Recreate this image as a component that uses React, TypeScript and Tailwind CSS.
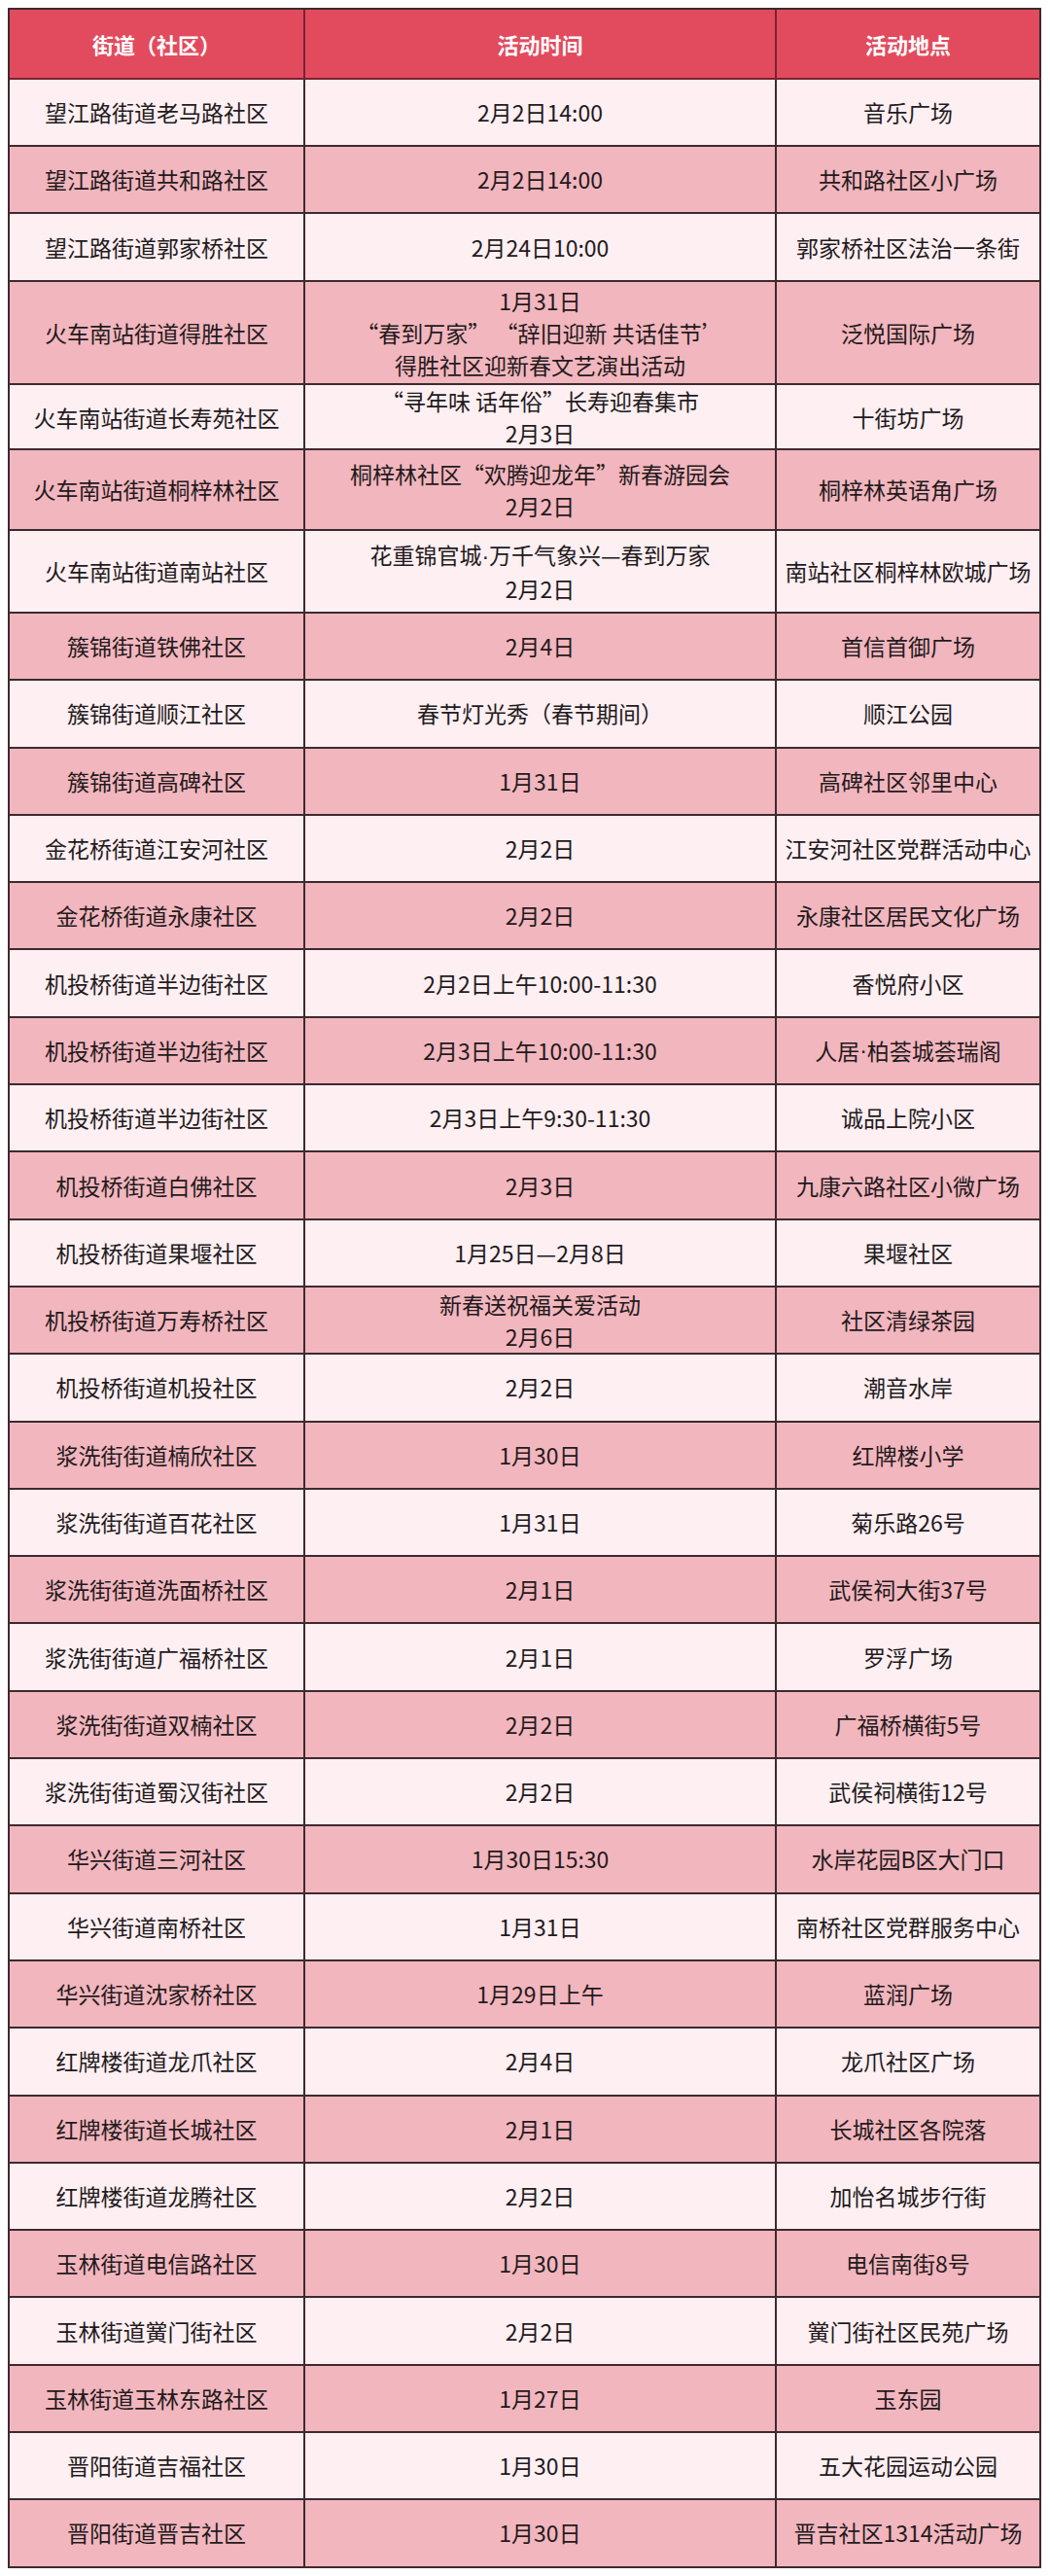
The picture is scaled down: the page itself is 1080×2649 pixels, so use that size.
import React from "react";

type Row = { a: string; b: string[]; c: string; h: string };

const rows: Row[] = [
  { a: "望江路街道老马路社区", b: ["2月2日14:00"], c: "音乐广场", h: "h-[69px]" },
  { a: "望江路街道共和路社区", b: ["2月2日14:00"], c: "共和路社区小广场", h: "h-[69px]" },
  { a: "望江路街道郭家桥社区", b: ["2月24日10:00"], c: "郭家桥社区法治一条街", h: "h-[70px]" },
  {
    a: "火车南站街道得胜社区",
    b: ["1月31日", "“春到万家” “辞旧迎新 共话佳节’", "得胜社区迎新春文艺演出活动"],
    c: "泛悦国际广场",
    h: "h-[106px]",
  },
  { a: "火车南站街道长寿苑社区", b: ["“寻年味 话年俗”长寿迎春集市", "2月3日"], c: "十街坊广场", h: "h-[67px]" },
  { a: "火车南站街道桐梓林社区", b: ["桐梓林社区“欢腾迎龙年”新春游园会", "2月2日"], c: "桐梓林英语角广场", h: "h-[83px]" },
  { a: "火车南站街道南站社区", b: ["花重锦官城·万千气象兴—春到万家", "2月2日"], c: "南站社区桐梓林欧城广场", h: "h-[85px]" },
  { a: "簇锦街道铁佛社区", b: ["2月4日"], c: "首信首御广场", h: "h-[69.3px]" },
  { a: "簇锦街道顺江社区", b: ["春节灯光秀（春节期间）"], c: "顺江公园", h: "h-[69.3px]" },
  { a: "簇锦街道高碑社区", b: ["1月31日"], c: "高碑社区邻里中心", h: "h-[69.3px]" },
  { a: "金花桥街道江安河社区", b: ["2月2日"], c: "江安河社区党群活动中心", h: "h-[69.3px]" },
  { a: "金花桥街道永康社区", b: ["2月2日"], c: "永康社区居民文化广场", h: "h-[69.3px]" },
  { a: "机投桥街道半边街社区", b: ["2月2日上午10:00-11:30"], c: "香悦府小区", h: "h-[69.3px]" },
  { a: "机投桥街道半边街社区", b: ["2月3日上午10:00-11:30"], c: "人居·柏荟城荟瑞阁", h: "h-[69.3px]" },
  { a: "机投桥街道半边街社区", b: ["2月3日上午9:30-11:30"], c: "诚品上院小区", h: "h-[69.3px]" },
  { a: "机投桥街道白佛社区", b: ["2月3日"], c: "九康六路社区小微广场", h: "h-[69.3px]" },
  { a: "机投桥街道果堰社区", b: ["1月25日—2月8日"], c: "果堰社区", h: "h-[69.3px]" },
  { a: "机投桥街道万寿桥社区", b: ["新春送祝福关爱活动", "2月6日"], c: "社区清绿茶园", h: "h-[69.3px]" },
  { a: "机投桥街道机投社区", b: ["2月2日"], c: "潮音水岸", h: "h-[69.3px]" },
  { a: "浆洗街街道楠欣社区", b: ["1月30日"], c: "红牌楼小学", h: "h-[69.3px]" },
  { a: "浆洗街街道百花社区", b: ["1月31日"], c: "菊乐路26号", h: "h-[69.3px]" },
  { a: "浆洗街街道洗面桥社区", b: ["2月1日"], c: "武侯祠大街37号", h: "h-[69.3px]" },
  { a: "浆洗街街道广福桥社区", b: ["2月1日"], c: "罗浮广场", h: "h-[69.3px]" },
  { a: "浆洗街街道双楠社区", b: ["2月2日"], c: "广福桥横街5号", h: "h-[69.3px]" },
  { a: "浆洗街街道蜀汉街社区", b: ["2月2日"], c: "武侯祠横街12号", h: "h-[69.3px]" },
  { a: "华兴街道三河社区", b: ["1月30日15:30"], c: "水岸花园B区大门口", h: "h-[69.3px]" },
  { a: "华兴街道南桥社区", b: ["1月31日"], c: "南桥社区党群服务中心", h: "h-[69.3px]" },
  { a: "华兴街道沈家桥社区", b: ["1月29日上午"], c: "蓝润广场", h: "h-[69.3px]" },
  { a: "红牌楼街道龙爪社区", b: ["2月4日"], c: "龙爪社区广场", h: "h-[69.3px]" },
  { a: "红牌楼街道长城社区", b: ["2月1日"], c: "长城社区各院落", h: "h-[69.3px]" },
  { a: "红牌楼街道龙腾社区", b: ["2月2日"], c: "加怡名城步行街", h: "h-[69.3px]" },
  { a: "玉林街道电信路社区", b: ["1月30日"], c: "电信南街8号", h: "h-[69.3px]" },
  { a: "玉林街道黉门街社区", b: ["2月2日"], c: "黉门街社区民苑广场", h: "h-[69.3px]" },
  { a: "玉林街道玉林东路社区", b: ["1月27日"], c: "玉东园", h: "h-[69.3px]" },
  { a: "晋阳街道吉福社区", b: ["1月30日"], c: "五大花园运动公园", h: "h-[69.3px]" },
  { a: "晋阳街道晋吉社区", b: ["1月30日"], c: "晋吉社区1314活动广场", h: "h-[69.3px]" },
];

const font = { fontFamily: '"Noto Sans CJK SC", "Noto Sans", sans-serif' };

function Txt({ s }: { s: string }) {
  const parts = s.split("·");
  return (
    <>
      {parts.map((p, i) => (
        <React.Fragment key={i}>
          {i > 0 && <span className="font-['Liberation_Sans',sans-serif]">·</span>}
          {p}
        </React.Fragment>
      ))}
    </>
  );
}

export default function App() {
  return (
    <div className="w-[1080px] min-h-[2649px] bg-white pt-[8px] pl-[8px]" style={font}>
      <div className="w-[1063px] border-l-2 border-t-2 border-[#3d2a2e]">
        <div className="grid h-[72px] grid-cols-[304px_485px_272px] border-b-2 border-[#7a2230] bg-[#e24b5e] text-[22px] font-bold text-white">
          <div className="flex items-center justify-center border-r-2 border-[#7a2230]">街道（社区）</div>
          <div className="flex items-center justify-center border-r-2 border-[#7a2230]">活动时间</div>
          <div className="flex items-center justify-center border-r-2 border-[#3d2a2e]">活动地点</div>
        </div>
        {rows.map((r, i) => (
          <div
            key={i}
            className={`grid grid-cols-[304px_485px_272px] border-b-2 border-[#3d2a2e] text-[23px] leading-[33px] text-[#231a1c] ${r.h} ${
              i % 2 === 0 ? "bg-[#fdeff2]" : "bg-[#f2b6be]"
            }`}
          >
            <div className="flex items-center justify-center whitespace-nowrap border-r-2 border-[#3d2a2e]">
              <Txt s={r.a} />
            </div>
            <div className="flex flex-col items-center justify-center whitespace-nowrap border-r-2 border-[#3d2a2e]">
              {r.b.map((l, j) => (
                <div key={j}>
                  <Txt s={l} />
                </div>
              ))}
            </div>
            <div className="flex items-center justify-center whitespace-nowrap border-r-2 border-[#3d2a2e]">
              <Txt s={r.c} />
            </div>
          </div>
        ))}
      </div>
    </div>
  );
}
